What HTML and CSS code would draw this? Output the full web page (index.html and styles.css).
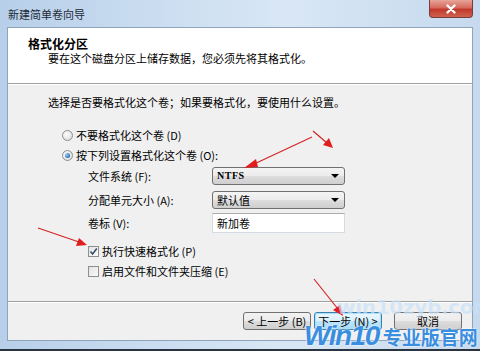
FILE: index.html
```html
<!DOCTYPE html>
<html lang="zh-CN">
<head>
<meta charset="utf-8">
<title>新建简单卷向导</title>
<link rel="stylesheet" href="styles.css">
</head>
<body>
<div class="window">
  <div class="titlebar">
    <span class="title">新建简单卷向导</span>
    <div class="close">
      <svg width="14" height="10" viewBox="0 0 14 10"><path d="M3.5 1.5 L10.5 8.5 M10.5 1.5 L3.5 8.5" stroke="#fff" stroke-width="2.4" stroke-linecap="round"/></svg>
    </div>
  </div>
  <div class="client">
    <div class="header">
      <div class="h-title">格式化分区</div>
      <div class="h-sub">要在这个磁盘分区上储存数据，您必须先将其格式化。</div>
    </div>
    <div class="body">
      <div class="intro">选择是否要格式化这个卷；如果要格式化，要使用什么设置。</div>
      <div class="radios">
        <div class="opt"><span class="radio"></span><span>不要格式化这个卷 (D)</span></div>
        <div class="opt"><span class="radio on"></span><span>按下列设置格式化这个卷 (O):</span></div>
      </div>
      <div class="form">
        <div class="frow r1"><span class="lbl">文件系统 (F):</span><div class="combo"><span class="val">NTFS</span><span class="caret"></span></div></div>
        <div class="frow r2"><span class="lbl">分配单元大小 (A):</span><div class="combo"><span class="val">默认值</span><span class="caret"></span></div></div>
        <div class="frow r3"><span class="lbl">卷标 (V):</span><div class="input">新加卷</div></div>
        <div class="chk c1"><span class="box"><svg width="9" height="9" viewBox="0 0 9 9"><path d="M1.5 4.5 L3.6 7 L7.8 1.5" fill="none" stroke="#3a4d6a" stroke-width="1.6"/></svg></span><span>执行快速格式化 (P)</span></div>
        <div class="chk"><span class="box"></span><span>启用文件和文件夹压缩 (E)</span></div>
      </div>
    </div>
    <div class="footer">
      <button class="btn">&lt; 上一步 (B)</button>
      <button class="btn next">下一步 (N) &gt;</button>
      <button class="btn cancel">取消</button>
    </div>
  </div>

  <svg class="arrows" width="480" height="351" viewBox="0 0 480 351">
    <g stroke="#d42424" stroke-width="1.2" fill="#e01e1e">
      <line x1="312" y1="137" x2="252" y2="165"/>
      <polygon points="244,168 256,159 258,167" stroke="none"/>
      <line x1="313" y1="131" x2="327" y2="143"/>
      <polygon points="333,148 323,145 329,138" stroke="none"/>
      <line x1="38" y1="228" x2="79" y2="242"/>
      <polygon points="87,245 76,246 79,238" stroke="none"/>
      <line x1="314" y1="279" x2="338" y2="309"/>
      <polygon points="343,316 333,310 340,305" stroke="none"/>
    </g>
  </svg>
  <div class="wm1">win10zyb.com</div>
  <div class="wm2"><span class="wm-w">Win10</span><span class="wm-c">专业版官网</span></div>
</div>
</body>
</html>
```
FILE: styles.css
```css
* { box-sizing: border-box; }
html, body { margin: 0; padding: 0; }
body {
  width: 480px;
  height: 351px;
  overflow: hidden;
  font-family: "Noto Sans CJK SC", "DejaVu Sans", sans-serif;
  font-size: 11px;
  color: #000;
}
.window {
  position: relative;
  width: 480px;
  height: 351px;
  overflow: hidden;
  display: flex;
  flex-direction: column;
  padding: 0 7px 8px 7px;
  background: linear-gradient(to right, #b7cfe9 0%, #c9dcf0 30%, #d9e7f5 60%, #c6d9ee 100%);
  border-bottom: 2px solid #2a3440;
}
.titlebar {
  height: 27px;
  display: flex;
  align-items: flex-start;
  justify-content: space-between;
}
.title {
  margin-top: 7px;
  padding-left: 1px;
  font-size: 11px;
  line-height: 14px;
  color: #1e2a38;
}
.close {
  width: 44px;
  height: 18px;
  border: 1px solid #7a3b3b;
  border-top: none;
  border-radius: 0 0 4px 4px;
  background: linear-gradient(to bottom, #e8a49a 0%, #d66a5c 45%, #c0392b 55%, #d0614f 100%);
  display: flex;
  align-items: center;
  justify-content: center;
}
.client {
  flex: 1;
  display: flex;
  flex-direction: column;
  background: #f0f0f0;
  border: 1px solid #8fa3ba;
}
.header {
  height: 56px;
  background: #fff;
  border-bottom: 1px solid #a0a0a0;
  box-shadow: 0 1px 0 #fff;
  padding: 8px 0 0 20px;
}
.h-title {
  font-weight: bold;
  font-size: 12px;
  line-height: 15px;
}
.h-sub {
  padding-left: 20px;
  line-height: 14px;
}
.body {
  flex: 1;
  padding: 11px 0 0 40px;
  border-bottom: 1px solid #a0a0a0;
  box-shadow: 0 1px 0 #fff;
}
.intro { line-height: 14px; }
.radios {
  margin-top: 16px;
  padding-left: 14px;
}
.opt {
  height: 20px;
  display: flex;
  align-items: center;
  gap: 3px;
}
.radio {
  width: 11px;
  height: 11px;
  border-radius: 50%;
  border: 1px solid #8e8f8f;
  background: radial-gradient(circle at 40% 40%, #fff 0%, #e6e6e6 60%, #cfcfcf 100%);
  display: flex;
  align-items: center;
  justify-content: center;
}
.radio.on::after {
  content: "";
  width: 5px;
  height: 5px;
  border-radius: 50%;
  background: radial-gradient(circle at 35% 35%, #9fd3f5 0%, #2a6fb7 70%, #1a4f8f 100%);
}
.form {
  padding-left: 40px;
  margin-top: 2px;
}
.frow {
  display: flex;
  align-items: center;
}
.r2 { margin-top: 6px; }
.r3 { margin-top: 4px; }
.lbl { width: 124px; }
.combo {
  width: 133px;
  height: 18px;
  border: 1px solid #707070;
  border-radius: 3px;
  background: linear-gradient(to bottom, #f4f4f4 0%, #ebebeb 50%, #dddddd 51%, #cfcfcf 100%);
  display: flex;
  align-items: center;
  justify-content: space-between;
  padding: 0 5px 0 4px;
}
.val { font-size: 11px; line-height: 14px; }
.r1 .val { font-family: "Liberation Serif", serif; font-weight: bold; font-size: 10px; letter-spacing: 0.5px; }
.caret {
  width: 0;
  height: 0;
  border-left: 4px solid transparent;
  border-right: 4px solid transparent;
  border-top: 4px solid #000;
}
.input {
  width: 133px;
  height: 20px;
  background: #fff;
  border: 1px solid #d5dbe2;
  border-top-color: #abadb3;
  padding: 2px 4px;
  line-height: 14px;
}
.chk {
  height: 20px;
  display: flex;
  align-items: center;
  gap: 3px;
}
.c1 { margin-top: 8px; }
.box {
  width: 11px;
  height: 11px;
  border: 1px solid #8e8f8f;
  background: linear-gradient(135deg, #e3e3e3, #fafafa);
  display: flex;
  align-items: center;
  justify-content: center;
}
.footer {
  height: 38px;
  display: flex;
  align-items: center;
  justify-content: flex-end;
  padding-right: 10px;
}
.btn {
  width: 68px;
  height: 18px;
  padding: 0;
  font-family: "Noto Sans CJK SC", "DejaVu Sans", sans-serif;
  font-size: 11px;
  line-height: 14px;
  color: #000;
  border: 1px solid #707070;
  border-radius: 3px;
  background: linear-gradient(to bottom, #f2f2f2 0%, #ebebeb 50%, #dddddd 51%, #cfcfcf 100%);
}
.next {
  margin-left: 3px;
  border-color: #3c7fb1;
  box-shadow: inset 0 0 0 1px #a6e0f8;
  background: linear-gradient(to bottom, #eaf6fd 0%, #d9f0fc 50%, #bee6fd 51%, #a7d9f5 100%);
}
.cancel { margin-left: 12px; }
.arrows {
  position: absolute;
  left: 0;
  top: 0;
  pointer-events: none;
}
.wm1 {
  position: absolute;
  left: 337px;
  top: 295px;
  font-family: "DejaVu Sans", sans-serif;
  font-weight: bold;
  font-size: 20px;
  line-height: 24px;
  letter-spacing: -0.3px;
  color: rgba(200, 226, 250, 0.7);
  pointer-events: none;
}
.wm2 {
  position: absolute;
  left: 304px;
  top: 320px;
  display: flex;
  align-items: baseline;
  gap: 4px;
  white-space: nowrap;
  color: #3a8ee0;
  pointer-events: none;
  text-shadow: 0 0 2px #fff, 0 0 1px #fff;
}
.wm-w {
  font-family: "Liberation Sans", sans-serif;
  font-style: italic;
  font-weight: bold;
  font-size: 28px;
  line-height: 32px;
  letter-spacing: -1.5px;
}
.wm-c {
  font-family: "Noto Sans CJK SC", sans-serif;
  font-weight: bold;
  font-size: 19px;
  line-height: 24px;
}
```
